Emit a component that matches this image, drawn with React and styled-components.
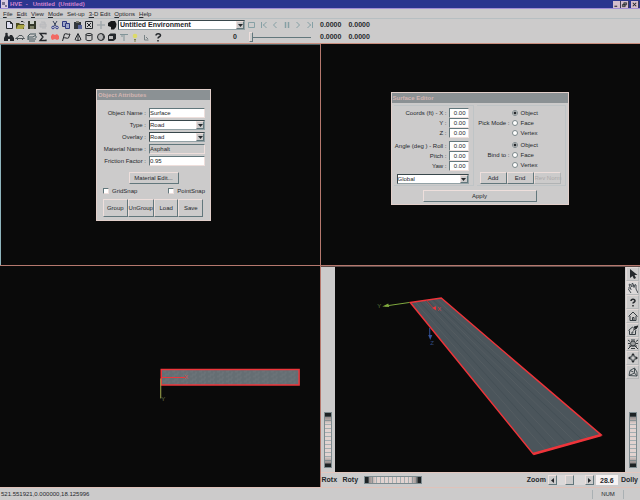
import styled, { createGlobalStyle, css } from 'styled-components';

const face = '#cccbcb';
const ink = '#25282c';
const light = '#eedfdc';
const shade = '#62777c';

const toolIcons = {
  new: <path d="M2.5 1.5h4l2 2v5h-6zM6.5 1.5v2h2" fill="#dde" stroke={ink} />,
  open: (
    <>
      <path d="M1 3h3l1 1h4v5H1z" fill="#4a4a20" />
      <path d="M3 5h7l-2 4H1z" fill="#a9a545" />
      <path d="M6 1.5h2l1 1" fill="none" stroke={ink} />
    </>
  ),
  save: (
    <>
      <path d="M1 1h8v8H1z" fill="#33382a" />
      <path d="M3 1h4v3H3z" fill="#cbd0c8" />
      <path d="M3 6h4v3H3z" fill="#7d8066" />
    </>
  ),
  print: <path d="M2 4h6v3H2zM3 2h4v2M4 8h4" fill="#c2c1c2" stroke="#b8babd" />,
  cut: (
    <>
      <path d="M3 1l3 5M7 1L4 6" stroke="#38435c" fill="none" />
      <circle cx="3" cy="7.5" r="1.3" fill="none" stroke="#343f91" />
      <circle cx="7" cy="7.5" r="1.3" fill="none" stroke="#343f91" />
    </>
  ),
  copy: (
    <>
      <path d="M1.5 1.5h4v5h-4z" fill="#9fa7c8" stroke="#303a80" />
      <path d="M4.5 3.5h4v5h-4z" fill="#9fa7c8" stroke="#303a80" />
    </>
  ),
  paste: (
    <>
      <path d="M1 2h7v7H1z" fill="#34383b" />
      <path d="M3 1h3v2H3z" fill="#77776c" />
      <path d="M5 5h4v4H5z" fill="#59659b" />
    </>
  ),
  remove: <path d="M1.5 1.5h7v7h-7zM3 3l4 4M7 3L3 7" fill="none" stroke={ink} />,
  plus: <path d="M5 1v8M1 5h8" fill="none" stroke="#a2a9ad" strokeWidth="1.5" />,
  hand: <path d="M1 3l3-2h4l1.5 3L9 7 7 9.500H4V7L1 6z" fill="#17191b" />,
  human: (
    <>
      <path d="M0 9V6l1.500-3h2L5 5l1-2h2l2 3v3H6V7H4v2z" fill={ink} />
      <circle cx="2.500" cy="2" r="1.300" fill={ink} />
    </>
  ),
  car: <path d="M.5 6.500l2-1 1.500-2h3l1.500 2 1 1zM2 7.500h1M7 7.500h1" fill="none" stroke="#50575b" />,
  crash: <path d="M1 4l2-2h6M1 5h5l3-2M1 7h8M2 9h6M1 4v4M9 4v2" fill="none" stroke="#45575c" />,
  sigma: <path d="M8 2.500V1.500H2l3 3.500-3 3.500h6v-1" fill="none" stroke={ink} strokeWidth="1.300" />,
  event: <path d="M1 4l1.500-2L5 3l2-1 2 2v3L7 8 5 7 2 8 1 6z" fill="#f26a63" />,
  flag: <path d="M1.500 9l2-7c2-1 3 1 5.500 0L7.500 6C6 7 4 5 2.500 6" fill="none" stroke={ink} />,
  cone: <path d="M5 1.500L2 7.500c1 1.300 5 1.300 6 0zM5 2v6" fill="none" stroke={ink} />,
  cylinder: (
    <path d="M2 2.500v5c0 1.500 6 1.500 6 0v-5c0 1.500-6 1.500-6 0 0-1.300 6-1.300 6 0" fill="none" stroke={ink} />
  ),
  sphere: (
    <>
      <circle cx="5" cy="5" r="3.500" fill="#b5b5b6" stroke={ink} />
      <path d="M6 2c2 2 2 4 0 6" fill="none" stroke={ink} />
    </>
  ),
  box: (
    <>
      <path d="M1.500 3.500l2-1.500h5v5l-2 1.500h-5z" fill={ink} stroke={ink} />
      <path d="M2 4h4v3H2z" fill="#bdbcbc" />
    </>
  ),
  tee: <path d="M1 2.500h8M5 3v6M2 4h2" fill="none" stroke="#819498" />,
  bulb: (
    <>
      <circle cx="5" cy="4" r="2.300" fill="#dcda69" />
      <path d="M4 7.500h2M4 9h2" stroke="#7e8252" fill="none" />
    </>
  ),
  axis: <path d="M3.500 3v5h4M5 5l2 2" fill="none" stroke="#788285" />,
  help: <path d="M3 3.500c0-2.500 4.500-2.500 4.500 0C7.500 5 5 4.500 5 6.500M5 8v1.500" fill="none" stroke={ink} strokeWidth="1.500" />,
};

const playIcons = {
  stop: <path d="M1.500 2.500h6v5h-6z" fill="none" stroke="#86a0a5" />,
  first: <path d="M2.500 2v6M7.500 2l-3 3 3 3M4 5h1" fill="none" stroke="#86a0a5" />,
  back: <path d="M6.500 2l-3 3 3 3" fill="none" stroke="#86a0a5" />,
  pause: <path d="M3.500 2v6M6.500 2v6" fill="none" stroke="#86a0a5" strokeWidth="1.500" />,
  forward: <path d="M3.500 2l3 3-3 3" fill="none" stroke="#86a0a5" />,
  last: <path d="M7.500 2v6M2.500 2l3 3-3 3M5 5h1" fill="none" stroke="#86a0a5" />,
};

const viewIcons = {
  pick: <path d="M2 0v9l2.500-2L6 10l2-1-1.500-3H9.500z" fill={ink} />,
  pan: <path d="M3 10L0 5.500l1-1 2 2-2-5 1-.5 2 3V.5h1l1 4 1-3 1 .5v4l2 4" fill="none" stroke="#444b50" />,
  what: <path d="M3 4c0-2.500 4-2.500 4 0C7 5.500 5 5 5 6.500M5 8v1.500" fill="none" stroke={ink} strokeWidth="1.500" />,
  home: <path d="M.5 5.500L5 1l4.500 4.500M2 5v4.500h6V5M4.500 9V6.500h1.500V9" fill="none" stroke="#353d42" />,
  setHome: (
    <>
      <path d="M.5 5.500L4.500 2 8 5.500M1.500 5.500v4h6v-4M4 9V7h1.500" fill="none" stroke="#353d42" />
      <path d="M10 1L6 2l2 2zM10 1L5 5.500" fill={ink} stroke={ink} />
    </>
  ),
  viewAll: (
    <>
      <circle cx="5" cy="4.500" r="2.500" fill="#9c9e9f" stroke="#343b3f" />
      <path d="M0 1l2 1.500M10 1L8 2.500M0 4.500h2M8 4.500h2M0 10l3-3M10 10L7 7M3 9.500h4M1 7h8M3 1h4" fill="none" stroke="#343b3f" />
    </>
  ),
  seek: (
    <>
      <path d="M5 0l2 2.500H3zM5 10l2-2.500H3zM0 5l2.500-2v4zM10 5L7.500 3v4z" fill={ink} />
      <circle cx="5" cy="5" r="2.300" fill="none" stroke="#454d51" />
    </>
  ),
  persp: <path d="M1 8.500l1-5 4.500-2.500 2.500 4v4zM1 8.500L6.500 6 9 9M6.500 1V6M2 3.500L5.500 5" fill="none" stroke="#465055" />,
};

const Icon = ({ children }) => (
  <svg width="10" height="10" viewBox="0 0 10 10" aria-hidden="true">
    {children}
  </svg>
);

const IconBar = ({ icons, width }) => (
  <IconRow $width={width}>
    {Object.entries(icons).map(([name, drawing]) => (
      <IconButton key={name} aria-label={name}>
        <Icon>{drawing}</Icon>
      </IconButton>
    ))}
  </IconRow>
);

const Select = ({ id, label, options, bold }) => (
  <SelectFrame>
    <SelectInput id={id} aria-label={label} $bold={bold}>
      {options.map((option) => (
        <option key={option}>{option}</option>
      ))}
    </SelectInput>
    <SelectArrow>
      <svg width="5" height="3" viewBox="0 0 5 3" aria-hidden="true">
        <path d="M0 0h5L2.500 3z" fill={ink} />
      </svg>
    </SelectArrow>
  </SelectFrame>
);

const menus = [
  ['F', 'ile'],
  ['E', 'dit'],
  ['V', 'iew'],
  ['M', 'ode'],
  ['', 'Set-up'],
  ['3-', 'D Edit'],
  ['O', 'ptions'],
  ['H', 'elp'],
];

const ObjectAttributes = () => (
  <ObjectDialog aria-label="Object Attributes">
    <DialogTitle>Object Attributes</DialogTitle>
    <AttributeForm>
      <label htmlFor="name">Object Name :</label>
      <TextInput id="name" defaultValue="Surface" />
      <label htmlFor="type">Type :</label>
      <Select id="type" options={['Road']} />
      <label htmlFor="overlay">Overlay :</label>
      <Select id="overlay" options={['Road']} />
      <label htmlFor="material">Material Name :</label>
      <TextInput id="material" defaultValue="Asphalt" readOnly />
      <label htmlFor="friction">Friction Factor :</label>
      <TextInput id="friction" defaultValue="0.95" />
    </AttributeForm>
    <MaterialButton>Material Edit...</MaterialButton>
    <Snaps>
      <CheckLabel>
        <Check type="checkbox" />
        GridSnap
      </CheckLabel>
      <CheckLabel>
        <Check type="checkbox" />
        PointSnap
      </CheckLabel>
    </Snaps>
    <GroupButtons>
      <PushButton>Group</PushButton>
      <PushButton>UnGroup</PushButton>
      <PushButton>Load</PushButton>
      <PushButton>Save</PushButton>
    </GroupButtons>
  </ObjectDialog>
);

const NumberFields = ({ fields }) => (
  <div>
    {fields.map(([id, label]) => (
      <NumberRow key={id}>
        <label htmlFor={id}>{label}</label>
        <NumberInput id={id} defaultValue="0.00" />
      </NumberRow>
    ))}
  </div>
);

const RadioGroup = ({ name, label }) => (
  <RadioSet role="radiogroup" aria-label={label}>
    <span>{label}</span>
    <RadioList>
      {['Object', 'Face', 'Vertex'].map((option) => (
        <CheckLabel key={option}>
          <Radio type="radio" name={name} defaultChecked={option === 'Object'} />
          {option}
        </CheckLabel>
      ))}
    </RadioList>
  </RadioSet>
);

const SurfaceEditor = () => (
  <SurfaceDialog aria-label="Surface Editor">
    <DialogTitle>Surface Editor</DialogTitle>
    <EditorBody>
      <EditorGroup>
        <NumberFields fields={[['x', 'Coords (ft) - X :'], ['y', 'Y :'], ['z', 'Z :']]} />
        <NumberFields fields={[['roll', 'Angle (deg ) - Roll :'], ['pitch', 'Pitch :'], ['yaw', 'Yaw :']]} />
        <CoordinateBox>
          <Select label="Coordinate system" options={['Global']} />
        </CoordinateBox>
      </EditorGroup>
      <EditorGroup>
        <RadioGroup name="pick" label="Pick Mode :" />
        <RadioGroup name="bind" label="Bind to :" />
        <EditButtons>
          <PushButton>Add</PushButton>
          <PushButton>End</PushButton>
          <PushButton disabled>Rev Norm</PushButton>
        </EditButtons>
      </EditorGroup>
    </EditorBody>
    <ApplyButton>Apply</ApplyButton>
  </SurfaceDialog>
);

const PlanDrawing = () => (
  <Drawing viewBox="0 266 320 221">
    <defs>
      <pattern id="asphalt" width="9" height="5" patternUnits="userSpaceOnUse">
        <path d="M0 0h9v5H0z" fill="#656e73" />
        <path d="M1 1h3M6 2h2M3 4h4" stroke="#747b7f" strokeWidth=".7" />
      </pattern>
    </defs>
    <path d="M161 369h138.500v15.500H161z" fill="url(#asphalt)" stroke="#ee363b" strokeWidth="1.500" />
    <path d="M161 377h24" stroke="#ee363b" />
    <path d="M160.500 378v20" stroke="#a5ad50" />
    <AxisText x="184" y="379" $color="#d44f50">X</AxisText>
    <AxisText x="161" y="401" $color="#6c7a4a">Y</AxisText>
  </Drawing>
);

const PerspectiveDrawing = () => (
  <Drawing viewBox="335 267 290 205">
    <path d="M410 302.500l31-4.500 160 137-68 19z" fill="#4b555b" />
    <g stroke="#5b6266" opacity=".6">
      <path d="M415 302L545 450M424 301l136 146M430 300l145 142M436 299l152 139" />
    </g>
    <g stroke="#424d53" opacity=".7">
      <path d="M419 301L552 448M427 300l141 144M433 300l149 140" />
    </g>
    <path d="M410 302.500l31-4.500 160 137-68 19z" fill="none" stroke="#ee343a" strokeWidth="1.500" />
    <path d="M533 454l68-19" stroke="#ee343a" strokeWidth="2.500" />
    <path d="M409 302.500l-24 3.500" stroke="#7fa83e" />
    <path d="M382 306.500l6-3 1 3.500z" fill="#7fa83e" />
    <path d="M426 300l7 8" stroke="#bb3439" strokeWidth=".8" />
    <path d="M432 308l3.500-2 .5 4.500z" fill="#ee343a" />
    <path d="M429.500 328v9" stroke="#36559e" />
    <path d="M428 335h4l-2 5z" fill="#36559e" />
    <AxisText x="377" y="308" $color="#5b7c3c">Y</AxisText>
    <AxisText x="437" y="311" $color="#d43b40">X</AxisText>
    <AxisText x="430" y="345" $color="#324a82">Z</AxisText>
  </Drawing>
);

const App = () => (
  <>
    <GlobalStyle />
    <Frame>
      <TitleBar>
        <AppIcon>
          <Icon>
            <path d="M1 0h7v8H1z" fill="#d9c7e0" />
            <path d="M2 2h3v3H2zM5 5h2v2H5z" fill="#79738f" />
          </Icon>
        </AppIcon>
        <TitleText>{'HVE  -   Untitled  (Untitled)'}</TitleText>
        <WindowButton aria-label="Minimize">
          <Icon><path d="M2 7.500h4" stroke={ink} strokeWidth="1.500" /></Icon>
        </WindowButton>
        <WindowButton aria-label="Restore">
          <Icon><path d="M4 2.500h4v3H4zM2 5h4v3H2z" fill="#777" stroke={ink} /></Icon>
        </WindowButton>
        <WindowButton aria-label="Close" $apart>
          <Icon><path d="M2.500 2.500l5 5M7.500 2.500l-5 5" stroke={ink} strokeWidth="1.500" /></Icon>
        </WindowButton>
      </TitleBar>
      <MenuBar>
        {menus.map(([key, rest]) => (
          <MenuItem key={rest}>
            <u>{key}</u>
            {rest}
          </MenuItem>
        ))}
      </MenuBar>
      <Toolbar>
        <IconBar
          width={113}
          icons={{
            New: toolIcons.new,
            Open: toolIcons.open,
            Save: toolIcons.save,
            Print: toolIcons.print,
            Cut: toolIcons.cut,
            Copy: toolIcons.copy,
            Paste: toolIcons.paste,
            Delete: toolIcons.remove,
            Add: toolIcons.plus,
            Info: toolIcons.hand,
          }}
        />
        <EnvironmentBox>
          <Select label="Environment" options={['Untitled Environment']} bold />
        </EnvironmentBox>
        <IconBar width={68} icons={playIcons} />
        <Readouts>
          <span>0.0000</span>
          <span>0.0000</span>
        </Readouts>
      </Toolbar>
      <Toolbar>
        <IconBar
          width={159}
          icons={{
            Human: toolIcons.human,
            Vehicle: toolIcons.car,
            Event: toolIcons.crash,
            Sum: toolIcons.sigma,
            Key: toolIcons.event,
            Flag: toolIcons.flag,
            Cone: toolIcons.cone,
            Cylinder: toolIcons.cylinder,
            Sphere: toolIcons.sphere,
            Box: toolIcons.box,
            Sign: toolIcons.tee,
            Light: toolIcons.bulb,
            Axis: toolIcons.axis,
            Help: toolIcons.help,
          }}
        />
        <FrameNumber>0</FrameNumber>
        <TimeSlider type="range" aria-label="Time" defaultValue="0" />
        <Readouts>
          <span>0.0000</span>
          <span>0.0000</span>
        </Readouts>
      </Toolbar>
      <Viewports>
        <Viewport $active>
          <ObjectAttributes />
        </Viewport>
        <Viewport>
          <SurfaceEditor />
        </Viewport>
        <Viewport>
          <PlanDrawing />
        </Viewport>
        <Viewer>
          <WheelColumn>
            <Wheel type="range" aria-label="Rotx" $vertical />
          </WheelColumn>
          <Canvas>
            <PerspectiveDrawing />
          </Canvas>
          <WheelColumn>
            <ViewTools>
              {Object.entries(viewIcons).map(([name, drawing]) => (
                <ViewButton key={name} aria-label={name} $pressed={name === 'pan'}>
                  <Icon>{drawing}</Icon>
                </ViewButton>
              ))}
            </ViewTools>
            <Wheel type="range" aria-label="Dolly" $vertical />
          </WheelColumn>
          <ViewerBar>
            <WheelName>Rotx</WheelName>
            <WheelName>Roty</WheelName>
            <Wheel type="range" aria-label="Roty" />
            <ZoomGroup>
              <label htmlFor="zoom">Zoom</label>
              <ZoomBar>
                <PushButton aria-label="Zoom out">
                  <svg width="3" height="5" viewBox="0 0 3 5"><path d="M3 0v5L0 2.500z" fill={ink} /></svg>
                </PushButton>
                <ZoomSlider type="range" aria-label="Zoom position" defaultValue="45" />
                <PushButton aria-label="Zoom in">
                  <svg width="3" height="5" viewBox="0 0 3 5"><path d="M0 0v5l3-2.500z" fill={ink} /></svg>
                </PushButton>
              </ZoomBar>
              <ZoomInput id="zoom" defaultValue="28.6" />
              <span>Dolly</span>
            </ZoomGroup>
          </ViewerBar>
        </Viewer>
      </Viewports>
      <StatusBar>
        <StatusText>521.551921,0.000000,18.125996</StatusText>
        <StatusCell>NUM</StatusCell>
        <StatusCell />
      </StatusBar>
    </Frame>
  </>
);

const GlobalStyle = createGlobalStyle`
  * {
    box-sizing: border-box;
  }

  body {
    margin: 0;
    background: ${face};
    color: ${ink};
    font: 6px/8px "Liberation Sans", Arial, sans-serif;
  }

  button, input, select {
    margin: 0;
    padding: 0;
    color: inherit;
    font: inherit;
    border-radius: 0;
  }

  svg {
    display: block;
    flex: none;
  }
`;

const raised = css`
  border: 1px solid;
  border-color: ${light} ${shade} ${shade} ${light};
`;

const sunken = css`
  border: 1px solid;
  border-color: ${shade} ${light} ${light} ${shade};
`;

const Frame = styled.div`
  display: flex;
  flex-direction: column;
  min-height: 100vh;
`;

const TitleBar = styled.header`
  display: flex;
  align-items: center;
  height: 9px;
  padding-right: 1px;
  background: #2b358f;
  border-bottom: 1px solid #a28ed4;
`;

const AppIcon = styled.span`
  flex: none;
  width: 10px;
  height: 8px;
  overflow: hidden;
`;

const TitleText = styled.h1`
  flex: 1;
  margin: 0;
  color: #d285cf;
  font-size: 6px;
  line-height: 8px;
  white-space: pre;
`;

const WindowButton = styled.button`
  width: 8px;
  height: 7px;
  margin-left: ${({ $apart }) => ($apart ? '2px' : '0')};
  overflow: hidden;
  background: #d5bdcc;
  border: 0;
  border-right: 1px solid #3f3c55;

  svg {
    width: 7px;
    height: 7px;
  }
`;

const MenuBar = styled.nav`
  display: flex;
  gap: 4px;
  height: 10px;
  padding: 1px 3px;
  border-bottom: 1px solid #b7bfc2;
`;

const MenuItem = styled.button`
  background: none;
  border: 0;
  white-space: pre;
`;

const Toolbar = styled.div`
  display: flex;
  align-items: center;
  height: 12px;
  padding-left: 4px;
`;

const IconRow = styled.div`
  display: flex;
  justify-content: space-between;
  width: ${({ $width }) => $width}px;
`;

const IconButton = styled.button`
  width: 10px;
  height: 10px;
  background: none;
  border: 0;
`;

const EnvironmentBox = styled.div`
  width: 127px;
  margin: 0 2px 0 1px;
`;

const Readouts = styled.output`
  display: flex;
  gap: 7px;
  margin-left: 5px;
  font-size: 7px;
  font-weight: bold;
`;

const FrameNumber = styled.span`
  width: 16px;
  margin-left: 70px;
  font-size: 7px;
  font-weight: bold;
`;

const TimeSlider = styled.input`
  width: 62px;
  height: 10px;
  margin-right: 4px;
  appearance: none;
  background: linear-gradient(${shade}, ${shade}) center / 100% 1px no-repeat;

  &::-webkit-slider-thumb {
    appearance: none;
    width: 4px;
    height: 10px;
    background: ${face};
    ${raised}
  }
`;

const SelectFrame = styled.div`
  position: relative;
  height: 10px;
  background: #fff;
  border: 1px solid;
  border-color: #38474b #93a2a6 #93a2a6 #38474b;
`;

const SelectInput = styled.select`
  display: block;
  width: 100%;
  height: 8px;
  padding-left: ${({ $bold }) => ($bold ? '1px' : '0')};
  appearance: none;
  background: none;
  border: 0;
  font-size: ${({ $bold }) => ($bold ? '7px' : '6px')};
  font-weight: ${({ $bold }) => ($bold ? 'bold' : 'normal')};
`;

const SelectArrow = styled.span`
  position: absolute;
  top: 0;
  right: 0;
  display: grid;
  place-items: center;
  width: 8px;
  height: 8px;
  background: ${face};
  pointer-events: none;
  ${raised}
`;

const Viewports = styled.main`
  flex: 1;
  display: grid;
  grid-template-columns: 1fr 1fr;
  grid-template-rows: 1fr 1fr;
  gap: 1px;
  min-height: 400px;
  background: #b5786e;
  border-top: 1px solid #c98d7d;
`;

const Viewport = styled.section`
  position: relative;
  overflow: hidden;
  background: #0a0a0a;
  border-left: 1px solid ${({ $active }) => ($active ? '#8fb5bd' : '#0a0a0a')};
  border-top: 1px solid ${({ $active }) => ($active ? '#4d6468' : '#0a0a0a')};
`;

const Drawing = styled.svg`
  position: absolute;
  inset: 0;
  width: 100%;
  height: 100%;
`;

const AxisText = styled.text`
  fill: ${({ $color }) => $color};
  font-size: 6px;
`;

const Dialog = styled.section`
  position: absolute;
  display: flex;
  flex-direction: column;
  background: ${face};
  border: 1px solid #e2cfca;
`;

const ObjectDialog = styled(Dialog)`
  left: 95px;
  top: 44px;
  width: 115px;
  padding-bottom: 3px;
`;

const SurfaceDialog = styled(Dialog)`
  left: 69px;
  top: 47px;
  width: 178px;
  padding-bottom: 2px;
`;

const DialogTitle = styled.h2`
  margin: 0;
  padding: 1px;
  background: #8b9194;
  color: #d3b5b2;
  font-size: 6px;
  line-height: 8px;
`;

const AttributeForm = styled.form`
  display: grid;
  grid-template-columns: 1fr 56px;
  grid-auto-rows: 10px;
  align-items: center;
  gap: 2px 3px;
  padding: 8px 5px 0 0;
  text-align: right;
  white-space: nowrap;
`;

const TextInput = styled.input`
  width: 100%;
  height: 10px;
  background: #fff;
  ${sunken}

  &:read-only {
    background: ${face};
  }
`;

const PushButton = styled.button`
  display: grid;
  place-items: center;
  background: ${face};
  white-space: nowrap;
  ${raised}

  &:disabled {
    color: #aca9a9;
    border-color: ${light} #b0b3b4 #b0b3b4 ${light};
  }
`;

const MaterialButton = styled(PushButton)`
  align-self: center;
  width: 50px;
  height: 12px;
  margin-top: 6px;
`;

const Snaps = styled.div`
  display: flex;
  justify-content: space-between;
  padding: 3px 5px 0 6px;
`;

const CheckLabel = styled.label`
  display: flex;
  align-items: center;
  gap: 3px;
`;

const Check = styled.input`
  width: 6px;
  height: 6px;
  appearance: none;
  background: #fff;
  ${sunken}
`;

const GroupButtons = styled.div`
  display: grid;
  grid-template-columns: repeat(4, 1fr);
  height: 18px;
  margin: 4px 7px 0 6px;
`;

const EditorBody = styled.div`
  display: grid;
  grid-template-columns: 80px 1fr;
  gap: 3px;
  padding: 2px 2px 0 2px;
`;

const EditorGroup = styled.div`
  display: flex;
  flex-direction: column;
  justify-content: space-between;
  height: 81px;
  padding: 2px 4px 1px 0;
  border: solid #bfc4c6;
  border-width: 1px 1px 1px 0;
`;

const CoordinateBox = styled.div`
  padding-left: 3px;
`;

const NumberRow = styled.div`
  display: flex;
  align-items: center;
  justify-content: flex-end;
  gap: 2px;
  height: 10px;
  white-space: nowrap;
`;

const NumberInput = styled.input`
  flex: none;
  width: 20px;
  height: 10px;
  padding-right: 2px;
  background: #fff;
  text-align: right;
  ${sunken}
`;

const RadioSet = styled.div`
  display: grid;
  grid-template-columns: 33px 1fr;
  align-items: center;
  gap: 2px;
  text-align: right;
  white-space: nowrap;
`;

const RadioList = styled.div`
  display: grid;
  grid-auto-rows: 10px;
`;

const Radio = styled.input`
  width: 6px;
  height: 6px;
  appearance: none;
  background: #fff;
  border: 1px solid #7c888b;
  border-radius: 50%;

  &:checked {
    background: radial-gradient(circle, ${ink} 0 1px, #fff 2px);
  }
`;

const EditButtons = styled.div`
  display: grid;
  grid-template-columns: repeat(3, 27px);
  grid-auto-rows: 12px;
  padding-left: 3px;
`;

const ApplyButton = styled(PushButton)`
  width: 114px;
  height: 12px;
  margin: 4px 0 0 31px;
`;

const Viewer = styled.section`
  display: grid;
  grid-template-columns: 14px 1fr 15px;
  grid-template-rows: 1fr 15px;
  background: ${face};
  border-top: 1px solid #5e4a48;
`;

const Canvas = styled.div`
  position: relative;
  background: #0a0a0a;
`;

const WheelColumn = styled.div`
  display: flex;
  flex-direction: column;
  align-items: center;
  justify-content: flex-end;
  padding-bottom: 4px;
`;

const Wheel = styled.input`
  flex: none;
  width: ${({ $vertical }) => ($vertical ? '8px' : '58px')};
  height: ${({ $vertical }) => ($vertical ? '56px' : '8px')};
  appearance: none;
  writing-mode: ${({ $vertical }) => ($vertical ? 'vertical-lr' : 'horizontal-tb')};
  background:
    linear-gradient(
      ${({ $vertical }) => ($vertical ? '180deg' : '90deg')},
      #1d2224 0 3px, #1d222466 4px, transparent 11px calc(100% - 11px), #1d222466 calc(100% - 4px), #1d2224 calc(100% - 3px)
    ),
    repeating-linear-gradient(
      ${({ $vertical }) => ($vertical ? '180deg' : '90deg')},
      #e2d3d0 0 3px, #a3aeb1 3px 4px
    );
  border: 1px solid #7e8b8f;

  &::-webkit-slider-thumb {
    appearance: none;
    width: 1px;
    height: 1px;
  }
`;

const ViewTools = styled.div`
  display: grid;
  grid-auto-rows: 14px;
  margin-bottom: auto;
`;

const ViewButton = styled.button`
  display: grid;
  place-items: center;
  width: 13px;
  background: ${({ $pressed }) => ($pressed ? '#dcd9d9' : face)};
  border: 1px solid;
  border-color: #e2d9d7 #b5b7b8 #b5b7b8 #e2d9d7;
`;

const ViewerBar = styled.footer`
  grid-column: 1 / -1;
  display: flex;
  align-items: center;
  gap: 6px;
  padding: 0 2px 0 1px;
  border-top: 1px solid #e3c6be;
  font-size: 7px;
  font-weight: bold;
`;

const WheelName = styled.span`
  width: 15px;
`;

const ZoomGroup = styled.div`
  display: flex;
  align-items: center;
  gap: 2px;
  margin-left: auto;
`;

const ZoomBar = styled.div`
  display: grid;
  grid-template-columns: 9px 28px 9px;
  height: 10px;
`;

const ZoomSlider = styled.input`
  width: 100%;
  height: 10px;
  appearance: none;
  background: #dad8d8;

  &::-webkit-slider-thumb {
    appearance: none;
    width: 9px;
    height: 10px;
    background: ${face};
    ${raised}
  }
`;

const ZoomInput = styled.input`
  width: 22px;
  height: 10px;
  margin-right: 1px;
  background: #f6f2f2;
  border: 0;
  text-align: center;
`;

const StatusBar = styled.footer`
  display: flex;
  align-items: center;
  height: 13px;
  padding-left: 1px;
  border-top: 1px solid #e0c2b9;
`;

const StatusText = styled.span`
  flex: 1;
`;

const StatusCell = styled.span`
  width: 31px;
  height: 9px;
  text-align: center;
  border-left: 1px solid #a9b0b3;

  &:last-child {
    width: 17px;
  }
`;

export default App;
